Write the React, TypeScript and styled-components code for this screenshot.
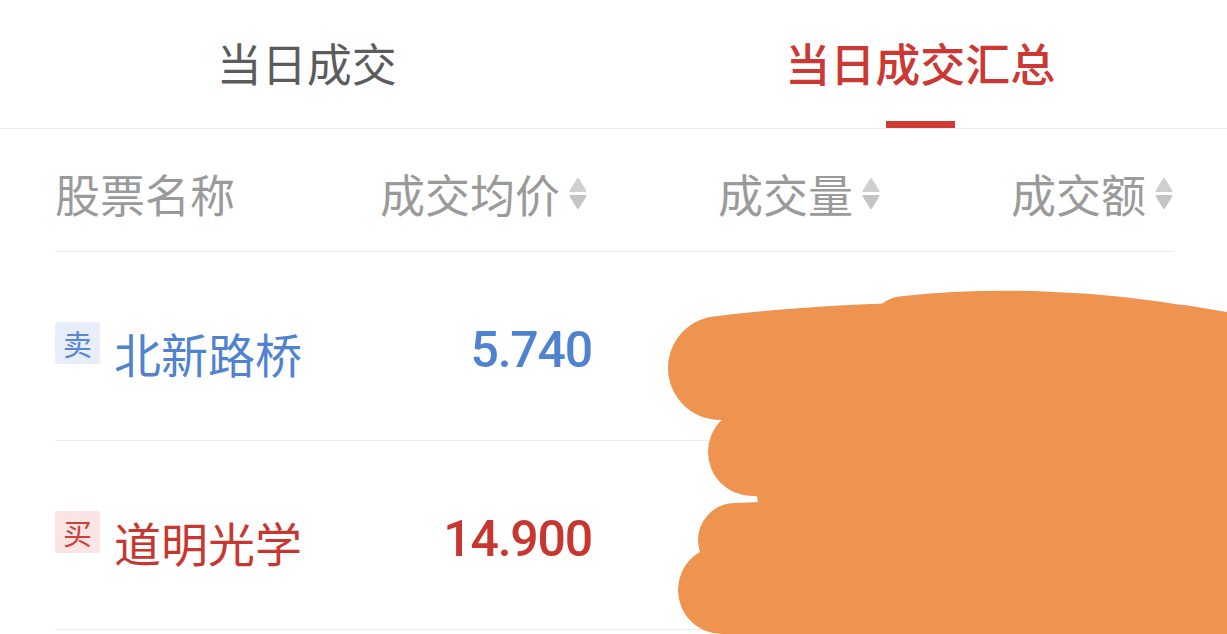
import React from "react";
import styled, { createGlobalStyle } from "styled-components";

const GlobalStyle = createGlobalStyle`
  html, body {
    margin: 0;
    padding: 0;
    background: #ffffff;
    overflow: hidden;
  }
  body {
    font-family: "Noto Sans CJK SC", "Noto Sans", sans-serif;
  }
`;

const Page = styled.div`
  position: relative;
  width: 1227px;
  height: 634px;
  background: #ffffff;
  overflow: hidden;
`;

const TabBar = styled.div`
  display: flex;
  height: 129px;
  box-sizing: border-box;
  border-bottom: 1px solid #ececec;
`;

const Tab = styled.div`
  flex: 1;
  display: flex;
  flex-direction: column;
  align-items: center;
  padding-top: 36px;
  box-sizing: border-box;
  height: 128px;
`;

const TabLabel = styled.span<{ $active?: boolean }>`
  font-family: "Noto Sans CJK SC", sans-serif;
  font-size: 45px;
  line-height: 54px;
  font-weight: ${(p) => (p.$active ? 500 : 400)};
  color: ${(p) => (p.$active ? "#cc3833" : "#5c5c5c")};
`;

const Indicator = styled.div<{ $active?: boolean }>`
  margin-top: auto;
  width: 69px;
  height: 7px;
  background: ${(p) => (p.$active ? "#cf3a33" : "transparent")};
`;

const Table = styled.div`
  padding: 0 54px 0 55px;
`;

const Row = styled.div<{ $height: number }>`
  display: grid;
  grid-template-columns: 239px repeat(3, 1fr);
  align-items: center;
  height: ${(p) => p.$height}px;
  box-sizing: border-box;
  border-bottom: 1px solid #ededed;
`;

const HeadCell = styled.div<{ $right?: boolean }>`
  display: flex;
  align-items: center;
  justify-content: ${(p) => (p.$right ? "flex-end" : "flex-start")};
  font-family: "Noto Sans CJK SC", sans-serif;
  font-size: 45px;
  line-height: 56px;
  color: #9a9a9a;
  padding-top: 8px;
  white-space: nowrap;
`;

const SortIcon = styled.svg`
  width: 18px;
  height: 34px;
  margin-left: 9px;
  flex: none;
`;

const NameCell = styled.div`
  display: flex;
  align-items: center;
  padding-top: 14px;
  white-space: nowrap;
`;

const Badge = styled.span<{ $side: "buy" | "sell" }>`
  display: inline-flex;
  align-items: center;
  justify-content: center;
  flex: none;
  width: 45px;
  height: 42px;
  border-radius: 3px;
  margin-right: 14px;
  margin-bottom: 20px;
  font-family: "Noto Sans CJK SC", sans-serif;
  font-size: 29px;
  line-height: 1;
  background: ${(p) => (p.$side === "sell" ? "#e7eef9" : "#fbe5e4")};
  color: ${(p) => (p.$side === "sell" ? "#5a87cf" : "#c9413b")};
`;

const StockName = styled.span<{ $side: "buy" | "sell" }>`
  font-family: "Noto Sans CJK SC", sans-serif;
  font-size: 47px;
  line-height: 60px;
  color: ${(p) => (p.$side === "sell" ? "#4f82cf" : "#c7372f")};
`;

const Price = styled.div<{ $side: "buy" | "sell" }>`
  text-align: right;
  font-family: Roboto, "Liberation Sans", sans-serif;
  font-weight: 500;
  font-size: 50px;
  letter-spacing: -1.2px;
  line-height: 60px;
  padding-top: 8px;
  margin-right: -5px;
  color: ${(p) => (p.$side === "sell" ? "#4f82cf" : "#c7372f")};
`;

const Redaction = styled.svg`
  position: absolute;
  left: 0;
  top: 0;
  width: 1227px;
  height: 634px;
  pointer-events: none;
`;

const Sort = () => (
  <SortIcon viewBox="0 0 18 34">
    <polygon points="9,2 16.5,14 1.5,14" fill="#cfcfcf" stroke="#cfcfcf" strokeWidth="2" strokeLinejoin="round" />
    <polygon points="1.5,19 16.5,19 9,31" fill="#c4c4c4" stroke="#c4c4c4" strokeWidth="2" strokeLinejoin="round" />
  </SortIcon>
);

type Side = "buy" | "sell";
const rows: { side: Side; badge: string; name: string; price: string }[] = [
  { side: "sell", badge: "卖", name: "北新路桥", price: "5.740" },
  { side: "buy", badge: "买", name: "道明光学", price: "14.900" },
];

const strokes: { d: string; w: number }[] = [
  { d: "M 720 368 C 850 352, 1000 350, 1185 360", w: 104 },
  { d: "M 905 335 C 1000 325, 1100 330, 1185 345", w: 78 },
  { d: "M 1180 360 L 1240 370", w: 110 },
  { d: "M 752 452 C 900 450, 1050 450, 1170 455", w: 88 },
  { d: "M 795 495 C 950 490, 1080 490, 1165 495", w: 76 },
  { d: "M 735 540 C 900 532, 1050 532, 1190 540", w: 74 },
  { d: "M 1170 545 L 1240 545", w: 100 },
  { d: "M 722 590 C 900 592, 1050 596, 1190 595", w: 88 },
  { d: "M 960 610 L 1240 612", w: 60 },
];

export default function App() {
  return (
    <Page>
      <GlobalStyle />
      <TabBar>
        <Tab>
          <TabLabel>当日成交</TabLabel>
          <Indicator />
        </Tab>
        <Tab>
          <TabLabel $active>当日成交汇总</TabLabel>
          <Indicator $active />
        </Tab>
      </TabBar>
      <Table>
        <Row $height={123}>
          <HeadCell>股票名称</HeadCell>
          <HeadCell $right>
            成交均价
            <Sort />
          </HeadCell>
          <HeadCell $right>
            成交量
            <Sort />
          </HeadCell>
          <HeadCell $right>
            成交额
            <Sort />
          </HeadCell>
        </Row>
        {rows.map((r) => (
          <Row key={r.name} $height={189}>
            <NameCell>
              <Badge $side={r.side}>{r.badge}</Badge>
              <StockName $side={r.side}>{r.name}</StockName>
            </NameCell>
            <Price $side={r.side}>{r.price}</Price>
            <div />
            <div />
          </Row>
        ))}
      </Table>
      <Redaction viewBox="0 0 1227 634">
        <g stroke="#ee9350" strokeLinecap="round" fill="none">
          {strokes.map((s, i) => (
            <path key={i} d={s.d} strokeWidth={s.w} />
          ))}
        </g>
        <rect x="760" y="340" width="467" height="260" fill="#ee9350" />
      </Redaction>
    </Page>
  );
}
